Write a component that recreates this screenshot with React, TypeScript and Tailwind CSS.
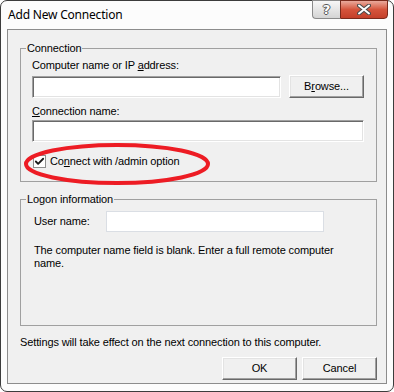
import { Check } from 'lucide-react'

function Sunken({ className }: { className: string }) {
  return (
    <div
      className={`bg-white border border-t-[#a0a0a0] border-l-[#a0a0a0] border-r-white border-b-white shadow-[inset_1px_1px_0_#696969,inset_-1px_-1px_0_#e3e3e3] ${className}`}
    />
  )
}

function Button({ children, className }: { children: React.ReactNode; className: string }) {
  return (
    <button
      className={`h-[23px] w-[75px] bg-[#f0f0f0] border border-t-white border-l-white border-r-[#696969] border-b-[#696969] shadow-[inset_-1px_-1px_0_#a0a0a0,inset_1px_1px_0_#e3e3e3] text-[11px] leading-[13px] tracking-[-0.12px] text-black ${className}`}
    >
      {children}
    </button>
  )
}

export default function App() {
  return (
    <div className="w-[394px] h-[392px] bg-white">
      <div className="relative w-[394px] h-[392px] flex flex-col border border-[#3c3c3c] rounded-[7px] bg-[#fcfcfc] px-[6px] pb-[7px] font-['Liberation_Sans',Arial,sans-serif] text-[11px] leading-[13px] tracking-[-0.12px] text-black">
        {/* title bar */}
        <div className="h-[28px] flex items-start justify-between">
          <span className="pt-[6px] pl-[1px] text-[12px] leading-[16px] tracking-[-0.2px] font-['Noto_Sans',sans-serif] text-black">
            Add New Connection
          </span>
          <div className="flex -mr-[1px] -mt-[1px]">
            <div className="w-[28px] h-[19px] flex items-center justify-center border border-[#8a8a8a] border-r-0 rounded-bl-[4px] bg-gradient-to-b from-[#f7f7f7] to-[#d4d4d4]">
              <span className="text-[13px] leading-[13px] font-bold text-white font-['DejaVu_Sans',sans-serif] [text-shadow:1px_0_#555,-1px_0_#555,0_1px_#555,0_-1px_#555]">
                ?
              </span>
            </div>
            <div className="w-[48px] h-[19px] flex items-center justify-center border border-[#7a2a1c] rounded-br-[4px] bg-gradient-to-b from-[#e9a99c] via-[#d5543c] to-[#c4402a]">
              <svg width="14" height="11" viewBox="0 0 14 11">
                <path d="M2 1.5 L12 9.5 M12 1.5 L2 9.5" stroke="#4a4a4a" strokeWidth="4" strokeLinecap="round" />
                <path d="M2 1.5 L12 9.5 M12 1.5 L2 9.5" stroke="#ffffff" strokeWidth="2" strokeLinecap="round" />
              </svg>
            </div>
          </div>
        </div>

        {/* client area */}
        <div className="flex-1 flex flex-col border border-[#8c8c8c] bg-[#f0f0f0]">
          <fieldset className="mt-[12px] ml-[12px] mr-[9px] p-0 border border-[#a0a0a0] min-w-0">
            <legend className="ml-[5px] px-[1px] leading-[13px]">Connection</legend>
            <div className="px-[11px] pb-[13px]">
              <div className="mt-[4px]">
                Computer name or IP <u>a</u>ddress:
              </div>
              <div className="mt-[4px] flex gap-[8px]">
                <Sunken className="w-[249px] h-[22px]" />
                <Button className="-mt-[1px]">
                  B<u>r</u>owse...
                </Button>
              </div>
              <div className="mt-[7px]">
                <u>C</u>onnection name:
              </div>
              <Sunken className="mt-[2px] w-[332px] h-[22px]" />
              <div className="mt-[13px] ml-[1px] flex items-center gap-[4px]">
                <div className="w-[13px] h-[13px] bg-white border border-[#8e8f8f] flex items-center justify-center">
                  <Check className="w-[11px] h-[11px] text-[#1a1a1a]" strokeWidth={4} />
                </div>
                <span>
                  Co<u>n</u>nect with /admin option
                </span>
              </div>
            </div>
          </fieldset>

          <fieldset className="mt-[11px] ml-[12px] mr-[9px] p-0 border border-[#a0a0a0] min-w-0">
            <legend className="ml-[5px] px-[1px] leading-[13px]">Logon information</legend>
            <div className="pl-[13px] pb-[55px]">
              <div className="mt-[5px] flex items-center">
                <span className="w-[72px]">User name:</span>
                <div className="w-[218px] h-[21px] bg-white border border-[#dadee4]" />
              </div>
              <p className="mt-[12px]">
                The computer name field is blank. Enter a full remote computer
                <br />
                name.
              </p>
            </div>
          </fieldset>

          <p className="mt-[10px] ml-[12px]">Settings will take effect on the next connection to this computer.</p>

          <div className="mt-[8px] mr-[9px] flex justify-end gap-[5px]">
            <Button className="">OK</Button>
            <Button className="">Cancel</Button>
          </div>
        </div>

        {/* red annotation ellipse */}
        <svg className="absolute left-0 top-0 pointer-events-none" width="394" height="392">
          <ellipse cx="116" cy="163" rx="91" ry="19" fill="none" stroke="#ed1c24" strokeWidth="4" />
        </svg>
      </div>
    </div>
  )
}
